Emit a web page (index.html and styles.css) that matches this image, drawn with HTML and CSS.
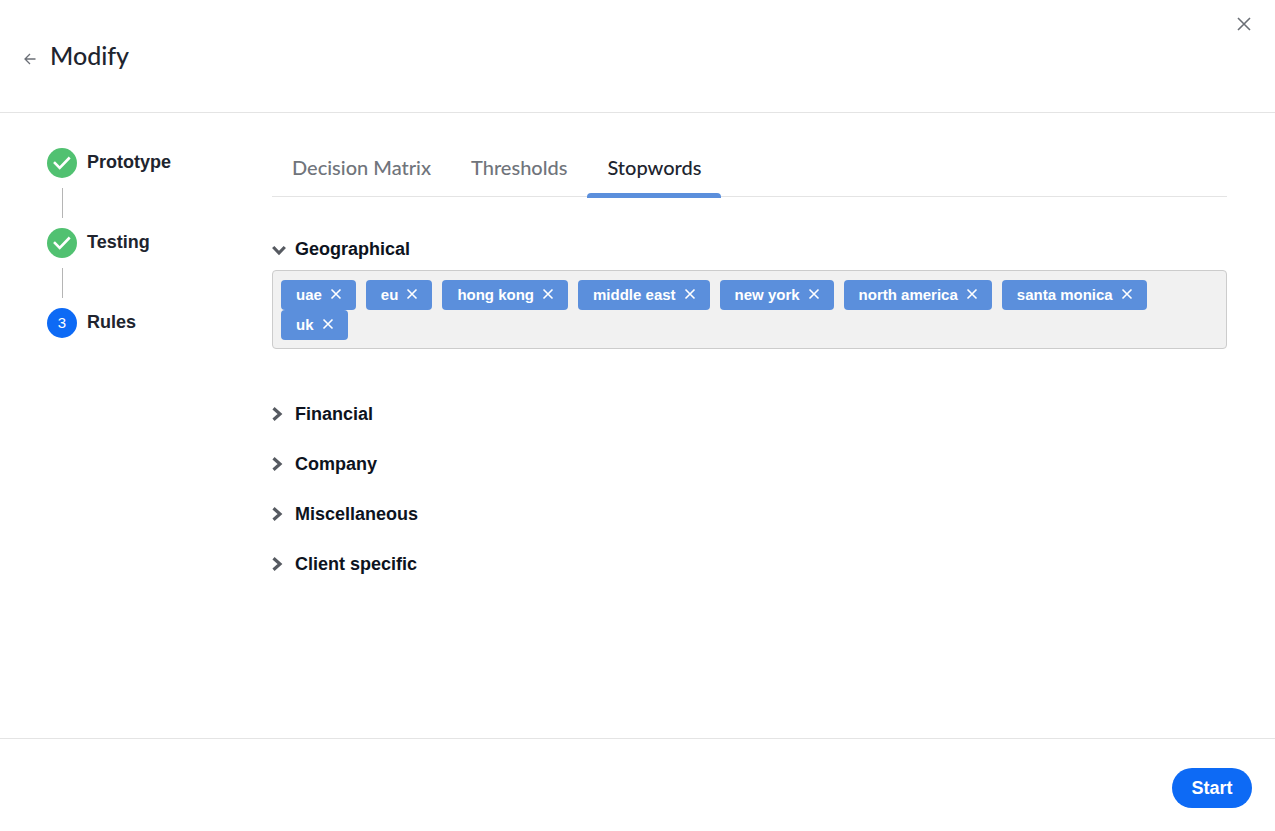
FILE: index.html
```html
<!DOCTYPE html>
<html lang="en">
<head>
<meta charset="utf-8">
<title>Modify</title>
<meta name="viewport" content="width=device-width, initial-scale=1">
<link rel="stylesheet" href="styles.css">
</head>
<body>
<svg class="defs" aria-hidden="true">
  <symbol id="cross" viewBox="0 0 12 12"><path d="M1.5 1.5l9 9M10.5 1.5l-9 9"/></symbol>
  <symbol id="check" viewBox="0 0 30 30"><path d="M7 14.200l5.700 5.800L22.700 9.500"/></symbol>
  <symbol id="chevron" viewBox="0 0 14 16"><path d="M1.500 2.200L8 8l-6.500 5.800"/></symbol>
  <symbol id="chevron-down" viewBox="0 0 14 16"><path d="M1.200 6L7 12l5.800-6"/></symbol>
</svg>
<header class="header">
  <button class="icon-button" aria-label="Back"><svg class="back-icon" viewBox="0 0 12 12"><path d="M6 1L1 6l5 5M1 6h10.500"/></svg></button>
  <h1 class="title">Modify</h1>
  <button class="icon-button close" aria-label="Close"><svg class="close-icon"><use href="#cross"/></svg></button>
</header>
<main class="main">
  <ol class="steps">
    <li class="step"><span class="badge done"><svg class="check-icon"><use href="#check"/></svg></span><span class="step-label">Prototype</span></li>
    <li class="step"><span class="badge done"><svg class="check-icon"><use href="#check"/></svg></span><span class="step-label">Testing</span></li>
    <li class="step" aria-current="step"><span class="badge">3</span><span class="step-label">Rules</span></li>
  </ol>
  <div class="content">
    <div class="tabs" role="tablist">
      <button class="tab" role="tab" aria-selected="false">Decision Matrix</button>
      <button class="tab" role="tab" aria-selected="false">Thresholds</button>
      <button class="tab active" role="tab" aria-selected="true">Stopwords</button>
    </div>
    <section class="group open">
      <button class="toggle" aria-expanded="true"><svg class="chevron"><use href="#chevron-down"/></svg>Geographical</button>
      <ul class="chips">
        <li class="chip">uae<button class="remove" aria-label="Remove uae"><svg class="remove-icon"><use href="#cross"/></svg></button></li>
        <li class="chip">eu<button class="remove" aria-label="Remove eu"><svg class="remove-icon"><use href="#cross"/></svg></button></li>
        <li class="chip">hong kong<button class="remove" aria-label="Remove hong kong"><svg class="remove-icon"><use href="#cross"/></svg></button></li>
        <li class="chip">middle east<button class="remove" aria-label="Remove middle east"><svg class="remove-icon"><use href="#cross"/></svg></button></li>
        <li class="chip">new york<button class="remove" aria-label="Remove new york"><svg class="remove-icon"><use href="#cross"/></svg></button></li>
        <li class="chip">north america<button class="remove" aria-label="Remove north america"><svg class="remove-icon"><use href="#cross"/></svg></button></li>
        <li class="chip">santa monica<button class="remove" aria-label="Remove santa monica"><svg class="remove-icon"><use href="#cross"/></svg></button></li>
        <li class="chip">uk<button class="remove" aria-label="Remove uk"><svg class="remove-icon"><use href="#cross"/></svg></button></li>
      </ul>
    </section>
    <section class="group"><button class="toggle" aria-expanded="false"><svg class="chevron"><use href="#chevron"/></svg>Financial</button></section>
    <section class="group"><button class="toggle" aria-expanded="false"><svg class="chevron"><use href="#chevron"/></svg>Company</button></section>
    <section class="group"><button class="toggle" aria-expanded="false"><svg class="chevron"><use href="#chevron"/></svg>Miscellaneous</button></section>
    <section class="group"><button class="toggle" aria-expanded="false"><svg class="chevron"><use href="#chevron"/></svg>Client specific</button></section>
  </div>
</main>
<footer class="footer"><button class="start">Start</button></footer>
</body>
</html>
```
FILE: styles.css
```css
* { box-sizing: border-box; }
body {
  margin: 0;
  min-height: 100vh;
  display: flex;
  flex-direction: column;
  background: #fff;
  color: #20242e;
  font-family: "Liberation Sans", Arial, sans-serif;
}
button {
  margin: 0;
  padding: 0;
  border: 0;
  background: none;
  color: inherit;
  font: inherit;
  cursor: pointer;
}
svg { display: block; fill: none; stroke: currentColor; }
.defs { display: none; }
.header {
  display: flex;
  align-items: flex-start;
  padding: 16px 23px 41px 24px;
  border-bottom: 1px solid #e4e4e4;
}
.icon-button { color: #6b6f76; }
.header > .icon-button { margin-top: 37px; }
.header > .close { margin: 0 0 0 auto; }
.back-icon { width: 12px; height: 12px; stroke-width: 1.3; }
.close-icon { width: 16px; height: 16px; stroke-width: 1.2; }
.title {
  margin: 23px 0 0 14px;
  font: 500 25px/32px Lato, sans-serif;
}
.main {
  flex: 1;
  display: flex;
  gap: 75px;
  padding: 35px 48px 48px 47px;
}
.steps {
  flex: 0 0 150px;
  margin: 0;
  padding: 0;
  list-style: none;
}
.step { display: flex; flex-wrap: wrap; column-gap: 10px; }
.step:not(:last-child)::after {
  content: "";
  width: 1px;
  height: 30px;
  margin: 10px 100px 10px 15px;
  background: #b5b5b5;
}
.badge {
  width: 30px;
  height: 30px;
  border-radius: 50%;
  background: #0d6af5;
  color: #fff;
  font-size: 15px;
  line-height: 30px;
  text-align: center;
}
.done { background: #51c171; }
.check-icon { width: 30px; height: 30px; stroke-width: 2.6; }
.step-label { font-size: 18px; font-weight: 700; line-height: 28px; }
.content { flex: 1; min-width: 0; }
.tabs { display: flex; border-bottom: 1px solid #e4e4e4; }
.tab {
  height: 50px;
  margin-bottom: -2px;
  padding: 0 20px 12px;
  color: #70747b;
  font: 500 20px/24px Lato, sans-serif;
}
.active {
  color: #20242e;
  position: relative;
}
.active::after {
  content: "";
  position: absolute;
  inset: auto 0 0;
  height: 5px;
  border-radius: 4px 4px 0 0;
  background: #5b8fdc;
}
.group { margin-top: 30px; }
.open { margin: 42px 0 55px; }
.toggle {
  display: flex;
  align-items: center;
  gap: 9px;
  color: #0d1320;
  font-size: 18px;
  font-weight: 700;
  line-height: 20px;
}
.chevron { width: 14px; height: 16px; color: #565a61; stroke-width: 3.2; }
.chips {
  display: flex;
  flex-wrap: wrap;
  column-gap: 10px;
  margin: 11px 0 0;
  padding: 9px 8px 8px;
  border: 1px solid #ccc;
  border-radius: 4px;
  background: #f1f1f1;
  list-style: none;
}
.chip {
  display: flex;
  align-items: center;
  gap: 8px;
  height: 30px;
  padding: 0 14px 2px 15px;
  border-radius: 4px;
  background: #5b8fdc;
  color: #fff;
  font-size: 15px;
  font-weight: 700;
}
.remove-icon { width: 12px; height: 12px; stroke-width: 1.6; }
.footer {
  display: flex;
  justify-content: flex-end;
  padding: 29px 23px 23px;
  border-top: 1px solid #e4e4e4;
}
.start {
  width: 80px;
  height: 40px;
  border-radius: 20px;
  background: #0d6af5;
  color: #fff;
  font-size: 18px;
  font-weight: 700;
}
```
